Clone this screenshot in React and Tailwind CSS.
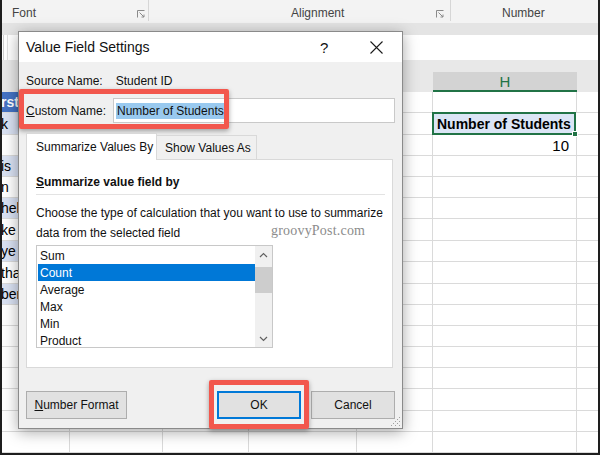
import React from "react";

const rowHeights = [
  "h-[21px]", "h-[22px]", "h-[21px]", "h-[21px]", "h-[21px]", "h-[21px]", "h-[22px]", "h-[21px]",
  "h-[22px]", "h-[21px]", "h-[21px]", "h-[21px]", "h-[21px]", "h-[21px]", "h-[22px]", "h-[21px]", "h-[21px]",
];
const colWidths = ["w-[70px]", "w-[93px]", "w-[86px]", "w-[108px]", "w-[76px]", "w-[144px]", "w-[23px]"];

const leftCells = [
  { t: "rst", c: "bg-[#4472c4] text-white font-bold" },
  { t: "k", c: "bg-[#d9e1f2]" },
  { t: "", c: "bg-white" },
  { t: "is", c: "bg-[#d9e1f2]" },
  { t: "n", c: "bg-white" },
  { t: "hel", c: "bg-[#d9e1f2]" },
  { t: "ke", c: "bg-white" },
  { t: "ye", c: "bg-[#d9e1f2]" },
  { t: "tha", c: "bg-white" },
  { t: "ber", c: "bg-[#d9e1f2]" },
];

function Launcher() {
  return (
    <svg width="8" height="8" viewBox="0 0 8 8" className="text-[#8a8a8a]">
      <path d="M0.5 7.5V0.5H7.5" fill="none" stroke="currentColor" strokeWidth="1" />
      <path d="M2.5 2.5L7 7M7 4.5V7H4.5" fill="none" stroke="currentColor" strokeWidth="1" />
    </svg>
  );
}

function Chevron({ up }) {
  return (
    <svg width="9" height="6" viewBox="0 0 9 6">
      <path d={up ? "M1 5L4.5 1.5L8 5" : "M1 1L4.5 4.5L8 1"} fill="none" stroke="#606060" strokeWidth="1.2" />
    </svg>
  );
}

function Sheet() {
  return (
    <div className="flex flex-col">
      {rowHeights.map((h, r) => (
        <div key={r} className={`flex ${h}`}>
          {colWidths.map((w, c) => {
            if (c === 0) {
              const cell = leftCells[r];
              return (
                <div key={c} className={`${w} shrink-0 border-r border-b border-[#dadada] flex items-center pl-[1px] text-[14px] leading-none text-black ${cell ? cell.c : "bg-white"}`}>
                  {cell ? cell.t : ""}
                </div>
              );
            }
            if (c === 5 && r === 1) {
              return (
                <div key={c} className={`${w} shrink-0 relative -mt-px -ml-px border-2 border-[#217346] bg-[#dbe5f5] flex items-center pl-[3px] text-[14px] font-bold leading-none text-black whitespace-nowrap`}>
                  Number of Students
                  <span className="absolute -right-[4px] -bottom-[4px] w-[6px] h-[6px] bg-[#217346] border border-white" />
                </div>
              );
            }
            if (c === 5 && r === 2) {
              return (
                <div key={c} className={`${w} shrink-0 border-r border-b border-[#dadada] flex items-center justify-end pr-[7px] text-[15px] leading-none text-black`}>
                  10
                </div>
              );
            }
            return <div key={c} className={`${w} shrink-0 border-r border-b border-[#dadada] bg-white`} />;
          })}
        </div>
      ))}
    </div>
  );
}

function Dialog() {
  return (
    <div className="absolute left-[18px] top-[31px] w-[385px] h-[398px] bg-[#f0f0f0] border border-[#8a8a8a] shadow-[0_3px_14px_rgba(0,0,0,0.35)] flex flex-col text-[12px] text-[#111]">
      {/* title bar */}
      <div className="h-[30px] bg-white flex items-center pl-[7px] relative shrink-0">
        <span className="text-[14px] leading-none">Value Field Settings</span>
        <span className="absolute left-[301px] top-[8px] text-[15px] leading-none">?</span>
        <svg className="absolute left-[351px] top-[9px]" width="13" height="13" viewBox="0 0 13 13">
          <path d="M0.5 0.5L12.5 12.5M12.5 0.5L0.5 12.5" stroke="#1a1a1a" strokeWidth="1.1" />
        </svg>
      </div>
      {/* body */}
      <div className="flex flex-col pl-[7px] pr-[7px] relative">
        <div className="mt-[12px] h-[14px] flex items-center leading-none">
          <span>Source Name:</span>
          <span className="ml-[13px]">Student ID</span>
        </div>
        <div className="mt-[10px] h-[25px] flex items-stretch">
          <div className="w-[87px] flex items-center leading-none">
            <span><span className="underline">C</span>ustom Name:</span>
          </div>
          <div className="flex-1 bg-white border border-[#c9c9c9] flex items-center pl-[2px]">
            <span className="bg-[#99c9ef] leading-none py-[2px] px-px">Number of Students</span>
          </div>
        </div>
        {/* tabs */}
        <div className="mt-[12px] h-[25px] flex items-end relative z-10">
          <div className="w-[131px] h-[27px] bg-white border border-[#d9d9d9] border-b-0 flex items-center pl-[9px] leading-none">
            Summarize Values By
          </div>
          <div className="w-[100px] h-[25px] bg-[#f0f0f0] border border-[#d9d9d9] border-l-0 flex items-center pl-[8px] leading-none">
            Show Values As
          </div>
        </div>
        {/* panel */}
        <div className="-mt-px h-[209px] mr-[2px] bg-white border border-[#d9d9d9] relative flex flex-col pl-[9px] pr-[7px]">
          <div className="mt-[15px] h-[14px] flex items-center font-bold leading-none">
            <span><span className="underline">S</span>ummarize value field by</span>
          </div>
          <div className="mt-[5px] h-px bg-[#e3e3e3]" />
          <div className="mt-[8px] leading-[20px]">
            Choose the type of calculation that you want to use to summarize
            <br />
            data from the selected field
          </div>
          <div className="mt-[2px] w-[237px] h-[103px] border border-[#c8c8c8] flex bg-white">
            <div className="flex-1 flex flex-col pt-[1px] pl-px overflow-hidden">
              {["Sum", "Count", "Average", "Max", "Min", "Product"].map((it) => (
                <div
                  key={it}
                  className={`h-[17px] shrink-0 flex items-center pl-[2px] leading-none ${it === "Count" ? "bg-[#0078d7] text-white" : ""}`}
                >
                  {it}
                </div>
              ))}
            </div>
            <div className="w-[17px] bg-[#f0f0f0] flex flex-col items-stretch">
              <div className="h-[17px] flex items-center justify-center"><Chevron up /></div>
              <div className="mt-[4px] h-[26px] bg-[#cdcdcd]" />
              <div className="flex-1" />
              <div className="h-[17px] flex items-center justify-center"><Chevron /></div>
            </div>
          </div>
          <span className="absolute left-[244px] top-[64px] font-['Liberation_Serif',serif] text-[14px] leading-none text-[#8c8c8c] tracking-[0.2px]">
            groovyPost.com
          </span>
        </div>
        {/* buttons */}
        <div className="mt-[23px] h-[28px] flex">
          <div className="w-[101px] bg-[#e1e1e1] border border-[#adadad] flex items-center justify-center leading-none">
            <span><span className="underline">N</span>umber Format</span>
          </div>
          <div className="ml-[90px] w-[84px] bg-[#e1e1e1] border-2 border-[#0078d7] flex items-center justify-center leading-none">
            OK
          </div>
          <div className="ml-[10px] w-[84px] bg-[#e1e1e1] border border-[#adadad] flex items-center justify-center leading-none">
            Cancel
          </div>
        </div>
      </div>
      {/* resize grip */}
      <svg className="absolute right-[1px] bottom-[1px]" width="11" height="11" viewBox="0 0 11 11">
        {[[9, 1], [9, 5], [5, 5], [9, 9], [5, 9], [1, 9], [7, 3], [7, 7], [3, 7]].map(([x, y], i) => (
          <rect key={i} x={x} y={y} width="1" height="1" fill="#a0a0a0" />
        ))}
      </svg>
    </div>
  );
}

export default function App() {
  return (
    <div className="relative w-[600px] h-[455px] overflow-hidden bg-white font-['Liberation_Sans',Arial,sans-serif]">
      {/* ribbon group labels */}
      <div className="h-[23px] bg-[#f3f3f3] flex text-[12px] text-[#444] leading-none">
        <div className="w-[149px] flex items-center pt-[5px] border-r border-[#d6d6d6] mb-[2px] relative">
          <span className="ml-[12px]">Font</span>
          <span className="absolute left-[137px] top-[10px]"><Launcher /></span>
        </div>
        <div className="w-[302px] flex items-center pt-[5px] border-r border-[#d6d6d6] mb-[2px] relative">
          <span className="ml-[142px]">Alignment</span>
          <span className="absolute left-[287px] top-[10px]"><Launcher /></span>
        </div>
        <div className="flex-1 flex items-center pt-[5px] mb-[2px]">
          <span className="ml-[51px]">Number</span>
        </div>
      </div>
      <div className="h-[12px] bg-[#e4e4e4]" />
      {/* formula bar */}
      <div className="h-[25px] bg-white flex">
        <div className="w-[4px] border-r border-[#d0d0d0]" />
        <div className="w-[4px] border-r border-[#e0e0e0]" />
      </div>
      <div className="h-[12px] bg-[#e8e8e8]" />
      {/* column headers */}
      <div className="h-[20px] flex bg-[#e8e8e8]">
        {colWidths.map((w, c) =>
          c === 5 ? (
            <div key={c} className={`${w} shrink-0 bg-[#d3d3d3] border-b-2 border-[#217346] flex items-center justify-center text-[15px] text-[#217346] leading-none`}>
              H
            </div>
          ) : (
            <div key={c} className={`${w} shrink-0 border-r border-[#e8e8e8]`} />
          )
        )}
      </div>
      <Sheet />

      <Dialog />

      {/* red highlight boxes */}
      <div className="absolute left-[19px] top-[89px] w-[210px] h-[40px] border-[5px] border-[#f2574d] rounded-[2px] shadow-[0_2px_5px_rgba(0,0,0,0.35)]" />
      <div className="absolute left-[209px] top-[380px] w-[100px] h-[49px] border-[5px] border-[#f2574d] rounded-[2px] shadow-[0_2px_5px_rgba(0,0,0,0.35)]" />

      {/* outer frame */}
      <div className="pointer-events-none absolute inset-0 border-l-2 border-r-2 border-b-2 border-[#1e1e1e]" />
    </div>
  );
}
